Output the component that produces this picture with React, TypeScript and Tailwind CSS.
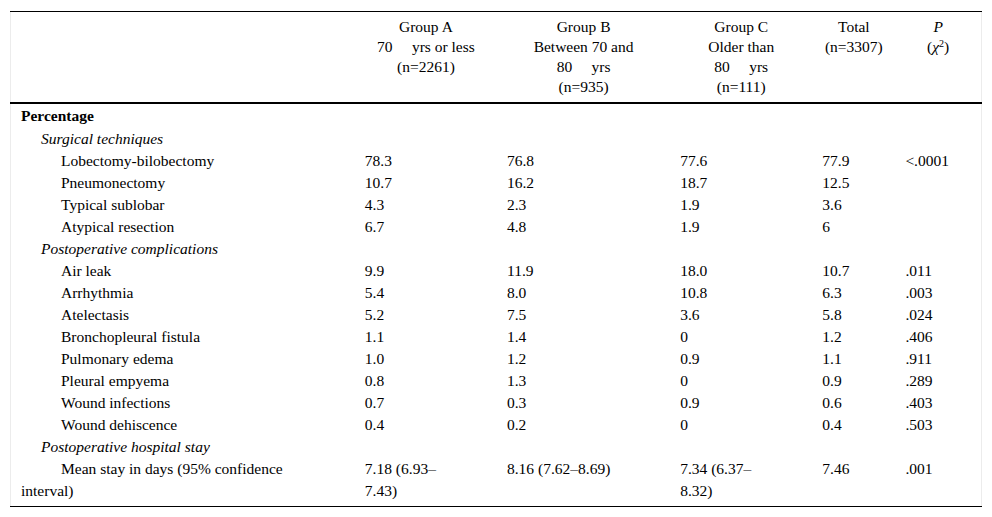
type Row = { label: string; level: 0 | 1 | 2; values?: string[] };

const rows: Row[] = [
  { label: "Percentage", level: 0 },
  { label: "Surgical techniques", level: 1 },
  { label: "Lobectomy-bilobectomy", level: 2, values: ["78.3", "76.8", "77.6", "77.9", "<.0001"] },
  { label: "Pneumonectomy", level: 2, values: ["10.7", "16.2", "18.7", "12.5", ""] },
  { label: "Typical sublobar", level: 2, values: ["4.3", "2.3", "1.9", "3.6", ""] },
  { label: "Atypical resection", level: 2, values: ["6.7", "4.8", "1.9", "6", ""] },
  { label: "Postoperative complications", level: 1 },
  { label: "Air leak", level: 2, values: ["9.9", "11.9", "18.0", "10.7", ".011"] },
  { label: "Arrhythmia", level: 2, values: ["5.4", "8.0", "10.8", "6.3", ".003"] },
  { label: "Atelectasis", level: 2, values: ["5.2", "7.5", "3.6", "5.8", ".024"] },
  { label: "Bronchopleural fistula", level: 2, values: ["1.1", "1.4", "0", "1.2", ".406"] },
  { label: "Pulmonary edema", level: 2, values: ["1.0", "1.2", "0.9", "1.1", ".911"] },
  { label: "Pleural empyema", level: 2, values: ["0.8", "1.3", "0", "0.9", ".289"] },
  { label: "Wound infections", level: 2, values: ["0.7", "0.3", "0.9", "0.6", ".403"] },
  { label: "Wound dehiscence", level: 2, values: ["0.4", "0.2", "0", "0.4", ".503"] },
  { label: "Postoperative hospital stay", level: 1 },
];

function LabelCell({ row }: { row: Row }) {
  if (row.level === 0) return <td className="pl-[10px] font-bold">{row.label}</td>;
  if (row.level === 1) return <td className="pl-[10px] indent-5 italic">{row.label}</td>;
  return <td className="pl-[10px] indent-10">{row.label}</td>;
}

export default function App() {
  return (
    <div className="bg-white px-[10px] pt-[11px] pb-[11px] text-black font-['Liberation_Serif','Times_New_Roman',serif]">
      <table className="w-full table-fixed border-collapse border-x border-[#ececec] text-[15.5px]">
        <colgroup>
          <col className="w-[344px]" />
          <col className="w-[142px]" />
          <col className="w-[173px]" />
          <col className="w-[142px]" />
          <col className="w-[83px]" />
          <col className="w-[86px]" />
        </colgroup>
        <thead>
          <tr className="border-t border-t-black border-b-2 border-b-black align-top text-center leading-[20px]">
            <th className="pt-[5px] pb-[5px] font-normal"></th>
            <th className="pt-[5px] pb-[5px] font-normal">
              Group A
              <br />
              70{"\u2003"} yrs or less
              <br />
              (n=2261)
            </th>
            <th className="pt-[5px] pb-[5px] font-normal">
              Group B
              <br />
              Between 70 and
              <br />
              80{"\u2003"} yrs
              <br />
              (n=935)
            </th>
            <th className="pt-[5px] pb-[5px] font-normal">
              Group C
              <br />
              Older than
              <br />
              80{"\u2003"} yrs
              <br />
              (n=111)
            </th>
            <th className="pt-[5px] pb-[5px] font-normal">
              Total
              <br />
              (n=3307)
            </th>
            <th className="pt-[5px] pb-[5px] font-normal">
              <i>P</i>
              <br />
              (<i>χ</i>
              <sup className="text-[10px]">2</sup>)
            </th>
          </tr>
        </thead>
        <tbody className="leading-[22px]">
          {rows.map((row, i) => (
            <tr key={row.label} className={i === 0 ? "h-[25px] align-middle" : "align-top"}>
              <LabelCell row={row} />
              {(row.values ?? ["", "", "", "", ""]).map((v, j) => (
                <td key={j} className="pl-[10px]">
                  {v}
                </td>
              ))}
            </tr>
          ))}
          <tr className="border-b border-b-black align-top">
            <td className="pl-[10px] pb-[4px] indent-10">
              Mean stay in days (95% confidence
              <br />
              interval)
            </td>
            <td className="pl-[10px]">
              7.18 (6.93–
              <br />
              7.43)
            </td>
            <td className="pl-[10px]">8.16 (7.62–8.69)</td>
            <td className="pl-[10px]">
              7.34 (6.37–
              <br />
              8.32)
            </td>
            <td className="pl-[10px]">7.46</td>
            <td className="pl-[10px]">.001</td>
          </tr>
        </tbody>
      </table>
    </div>
  );
}
